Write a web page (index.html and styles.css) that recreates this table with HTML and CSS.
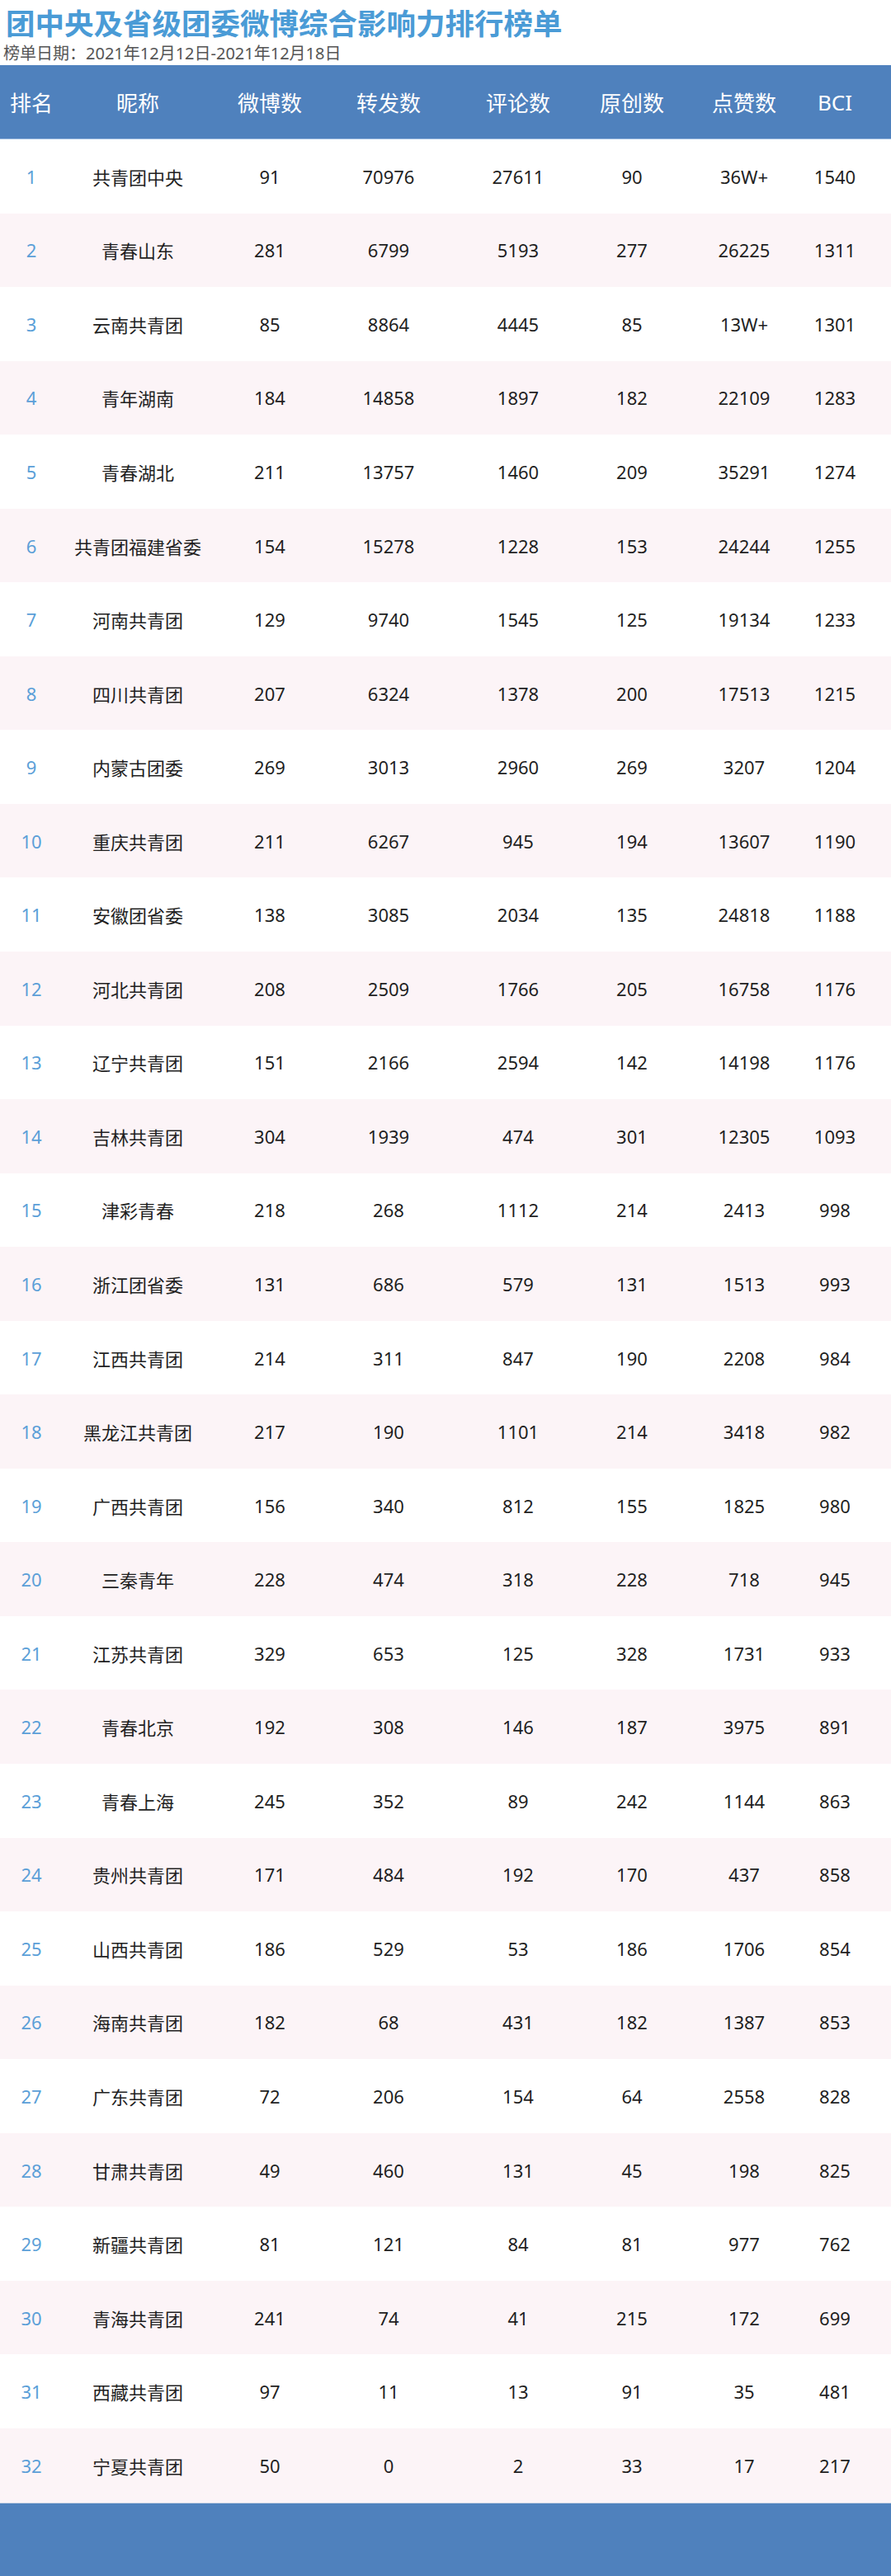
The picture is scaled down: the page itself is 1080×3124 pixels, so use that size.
FILE: index.html
```html
<!DOCTYPE html>
<html lang="zh-CN">
<head>
<meta charset="utf-8">
<title>团中央及省级团委微博综合影响力排行榜单</title>
<link rel="stylesheet" href="styles.css">
</head>
<body>
<div class="page">
  <h1 class="title">团中央及省级团委微博综合影响力排行榜单</h1>
  <div class="date">榜单日期：2021年12月12日-2021年12月18日</div>
  <div class="table">
    <div class="row head">
      <span>排名</span><span>昵称</span><span>微博数</span><span>转发数</span><span>评论数</span><span>原创数</span><span>点赞数</span><span>BCI</span>
    </div>
    <div class="row"><span class="rank">1</span><span>共青团中央</span><span>91</span><span>70976</span><span>27611</span><span>90</span><span>36W+</span><span>1540</span></div>
    <div class="row"><span class="rank">2</span><span>青春山东</span><span>281</span><span>6799</span><span>5193</span><span>277</span><span>26225</span><span>1311</span></div>
    <div class="row"><span class="rank">3</span><span>云南共青团</span><span>85</span><span>8864</span><span>4445</span><span>85</span><span>13W+</span><span>1301</span></div>
    <div class="row"><span class="rank">4</span><span>青年湖南</span><span>184</span><span>14858</span><span>1897</span><span>182</span><span>22109</span><span>1283</span></div>
    <div class="row"><span class="rank">5</span><span>青春湖北</span><span>211</span><span>13757</span><span>1460</span><span>209</span><span>35291</span><span>1274</span></div>
    <div class="row"><span class="rank">6</span><span>共青团福建省委</span><span>154</span><span>15278</span><span>1228</span><span>153</span><span>24244</span><span>1255</span></div>
    <div class="row"><span class="rank">7</span><span>河南共青团</span><span>129</span><span>9740</span><span>1545</span><span>125</span><span>19134</span><span>1233</span></div>
    <div class="row"><span class="rank">8</span><span>四川共青团</span><span>207</span><span>6324</span><span>1378</span><span>200</span><span>17513</span><span>1215</span></div>
    <div class="row"><span class="rank">9</span><span>内蒙古团委</span><span>269</span><span>3013</span><span>2960</span><span>269</span><span>3207</span><span>1204</span></div>
    <div class="row"><span class="rank">10</span><span>重庆共青团</span><span>211</span><span>6267</span><span>945</span><span>194</span><span>13607</span><span>1190</span></div>
    <div class="row"><span class="rank">11</span><span>安徽团省委</span><span>138</span><span>3085</span><span>2034</span><span>135</span><span>24818</span><span>1188</span></div>
    <div class="row"><span class="rank">12</span><span>河北共青团</span><span>208</span><span>2509</span><span>1766</span><span>205</span><span>16758</span><span>1176</span></div>
    <div class="row"><span class="rank">13</span><span>辽宁共青团</span><span>151</span><span>2166</span><span>2594</span><span>142</span><span>14198</span><span>1176</span></div>
    <div class="row"><span class="rank">14</span><span>吉林共青团</span><span>304</span><span>1939</span><span>474</span><span>301</span><span>12305</span><span>1093</span></div>
    <div class="row"><span class="rank">15</span><span>津彩青春</span><span>218</span><span>268</span><span>1112</span><span>214</span><span>2413</span><span>998</span></div>
    <div class="row"><span class="rank">16</span><span>浙江团省委</span><span>131</span><span>686</span><span>579</span><span>131</span><span>1513</span><span>993</span></div>
    <div class="row"><span class="rank">17</span><span>江西共青团</span><span>214</span><span>311</span><span>847</span><span>190</span><span>2208</span><span>984</span></div>
    <div class="row"><span class="rank">18</span><span>黑龙江共青团</span><span>217</span><span>190</span><span>1101</span><span>214</span><span>3418</span><span>982</span></div>
    <div class="row"><span class="rank">19</span><span>广西共青团</span><span>156</span><span>340</span><span>812</span><span>155</span><span>1825</span><span>980</span></div>
    <div class="row"><span class="rank">20</span><span>三秦青年</span><span>228</span><span>474</span><span>318</span><span>228</span><span>718</span><span>945</span></div>
    <div class="row"><span class="rank">21</span><span>江苏共青团</span><span>329</span><span>653</span><span>125</span><span>328</span><span>1731</span><span>933</span></div>
    <div class="row"><span class="rank">22</span><span>青春北京</span><span>192</span><span>308</span><span>146</span><span>187</span><span>3975</span><span>891</span></div>
    <div class="row"><span class="rank">23</span><span>青春上海</span><span>245</span><span>352</span><span>89</span><span>242</span><span>1144</span><span>863</span></div>
    <div class="row"><span class="rank">24</span><span>贵州共青团</span><span>171</span><span>484</span><span>192</span><span>170</span><span>437</span><span>858</span></div>
    <div class="row"><span class="rank">25</span><span>山西共青团</span><span>186</span><span>529</span><span>53</span><span>186</span><span>1706</span><span>854</span></div>
    <div class="row"><span class="rank">26</span><span>海南共青团</span><span>182</span><span>68</span><span>431</span><span>182</span><span>1387</span><span>853</span></div>
    <div class="row"><span class="rank">27</span><span>广东共青团</span><span>72</span><span>206</span><span>154</span><span>64</span><span>2558</span><span>828</span></div>
    <div class="row"><span class="rank">28</span><span>甘肃共青团</span><span>49</span><span>460</span><span>131</span><span>45</span><span>198</span><span>825</span></div>
    <div class="row"><span class="rank">29</span><span>新疆共青团</span><span>81</span><span>121</span><span>84</span><span>81</span><span>977</span><span>762</span></div>
    <div class="row"><span class="rank">30</span><span>青海共青团</span><span>241</span><span>74</span><span>41</span><span>215</span><span>172</span><span>699</span></div>
    <div class="row"><span class="rank">31</span><span>西藏共青团</span><span>97</span><span>11</span><span>13</span><span>91</span><span>35</span><span>481</span></div>
    <div class="row"><span class="rank">32</span><span>宁夏共青团</span><span>50</span><span>0</span><span>2</span><span>33</span><span>17</span><span>217</span></div>
  </div>
  <div class="footer-bar"></div>
</div>
</body>
</html>
```

FILE: styles.css
```css
html, body {
  margin: 0;
  padding: 0;
  background: #ffffff;
}

.page {
  width: 1080px;
  font-family: "Noto Sans", "Noto Sans CJK SC", sans-serif;
  color: #1f1f1f;
}

.title {
  margin: 0;
  padding-left: 7px;
  height: 54px;
  font-family: "Noto Sans CJK SC", sans-serif;
  font-size: 35.5px;
  line-height: 54px;
  font-weight: 700;
  color: #4a9bd6;
  white-space: nowrap;
}

.date {
  padding-left: 4px;
  height: 25px;
  font-size: 20px;
  line-height: 22px;
  color: #555555;
  white-space: nowrap;
}

.table {
  display: flex;
  flex-direction: column;
}

.row {
  display: grid;
  grid-template-columns: 76px 182px 138px 150px 164px 112px 160px 60px;
  align-items: center;
  height: 89.55px;
  font-size: 22px;
  color: #1f1f1f;
}

.row > span {
  text-align: center;
  white-space: nowrap;
}

.row:nth-child(odd) {
  background: #fcf4f7;
}

.row.head {
  height: 90px;
  background: #4f81bd;
  color: #ffffff;
  font-size: 26px;
  border-bottom: 1px solid #9dbbe0;
  box-sizing: border-box;
}

.rank {
  color: #5b9fd8;
}

.footer-bar {
  height: 90px;
  background: #4f81bd;
  border-top: 1px solid #c9d3e4;
}
```
